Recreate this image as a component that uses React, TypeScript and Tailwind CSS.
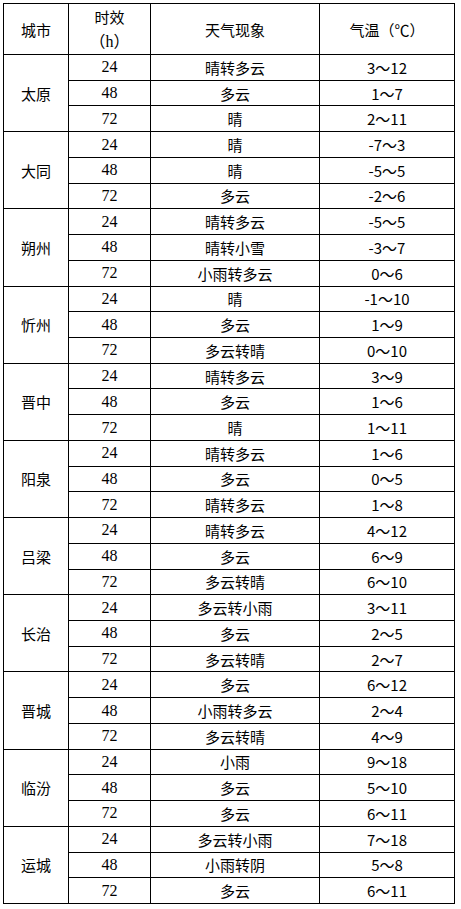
type Forecast = { hours: string; weather: string; temp: string };

type CityRow = { city: string; days: Forecast[] };

const CJK = "[font-family:Noto_Sans_CJK_SC,sans-serif] text-[15px]";
const SERIF = "[font-family:Liberation_Serif,Noto_Sans_CJK_SC,serif] text-[16px]";

const cities: CityRow[] = [
  {
    city: "太原",
    days: [
      { hours: "24", weather: "晴转多云", temp: "3～12" },
      { hours: "48", weather: "多云", temp: "1～7" },
      { hours: "72", weather: "晴", temp: "2～11" },
    ],
  },
  {
    city: "大同",
    days: [
      { hours: "24", weather: "晴", temp: "-7～3" },
      { hours: "48", weather: "晴", temp: "-5～5" },
      { hours: "72", weather: "多云", temp: "-2～6" },
    ],
  },
  {
    city: "朔州",
    days: [
      { hours: "24", weather: "晴转多云", temp: "-5～5" },
      { hours: "48", weather: "晴转小雪", temp: "-3～7" },
      { hours: "72", weather: "小雨转多云", temp: "0～6" },
    ],
  },
  {
    city: "忻州",
    days: [
      { hours: "24", weather: "晴", temp: "-1～10" },
      { hours: "48", weather: "多云", temp: "1～9" },
      { hours: "72", weather: "多云转晴", temp: "0～10" },
    ],
  },
  {
    city: "晋中",
    days: [
      { hours: "24", weather: "晴转多云", temp: "3～9" },
      { hours: "48", weather: "多云", temp: "1～6" },
      { hours: "72", weather: "晴", temp: "1～11" },
    ],
  },
  {
    city: "阳泉",
    days: [
      { hours: "24", weather: "晴转多云", temp: "1～6" },
      { hours: "48", weather: "多云", temp: "0～5" },
      { hours: "72", weather: "晴转多云", temp: "1～8" },
    ],
  },
  {
    city: "吕梁",
    days: [
      { hours: "24", weather: "晴转多云", temp: "4～12" },
      { hours: "48", weather: "多云", temp: "6～9" },
      { hours: "72", weather: "多云转晴", temp: "6～10" },
    ],
  },
  {
    city: "长治",
    days: [
      { hours: "24", weather: "多云转小雨", temp: "3～11" },
      { hours: "48", weather: "多云", temp: "2～5" },
      { hours: "72", weather: "多云转晴", temp: "2～7" },
    ],
  },
  {
    city: "晋城",
    days: [
      { hours: "24", weather: "多云", temp: "6～12" },
      { hours: "48", weather: "小雨转多云", temp: "2～4" },
      { hours: "72", weather: "多云转晴", temp: "4～9" },
    ],
  },
  {
    city: "临汾",
    days: [
      { hours: "24", weather: "小雨", temp: "9～18" },
      { hours: "48", weather: "多云", temp: "5～10" },
      { hours: "72", weather: "多云", temp: "6～11" },
    ],
  },
  {
    city: "运城",
    days: [
      { hours: "24", weather: "多云转小雨", temp: "7～18" },
      { hours: "48", weather: "小雨转阴", temp: "5～8" },
      { hours: "72", weather: "多云", temp: "6～11" },
    ],
  },
];

const cell = "flex items-center justify-center bg-white text-black";

function Header() {
  return (
    <>
      <div className={`${cell} ${CJK} leading-none`}>城市</div>
      <div className={`${cell} flex-col`}>
        <span className={`${CJK} leading-[25px]`}>时效</span>
        <span className={`${SERIF} leading-[25px]`}>（h）</span>
      </div>
      <div className={`${cell} ${CJK} leading-none`}>天气现象</div>
      <div className={`${cell} ${CJK} leading-none`}>气温（℃）</div>
    </>
  );
}

function CityBlock({ row }: { row: CityRow }) {
  return (
    <>
      <div className={`${cell} ${CJK} row-span-3 leading-none`}>{row.city}</div>
      {row.days.map((d) => (
        <div key={d.hours} className="contents">
          <div className={`${cell} ${SERIF} leading-none`}>{d.hours}</div>
          <div className={`${cell} ${CJK} leading-none`}>{d.weather}</div>
          <div className={`${cell} ${CJK} leading-none`}>{d.temp}</div>
        </div>
      ))}
    </>
  );
}

export default function App() {
  return (
    <div className="min-h-[909px] w-[461px] bg-white pl-[3px] pt-[3px]">
      <div className="grid h-[901px] w-[452px] grid-cols-[64px_81px_168px_134px] grid-rows-[50px_repeat(33,minmax(0,1fr))] gap-px border border-black bg-black">
        <Header />
        {cities.map((row) => (
          <CityBlock key={row.city} row={row} />
        ))}
      </div>
    </div>
  );
}
